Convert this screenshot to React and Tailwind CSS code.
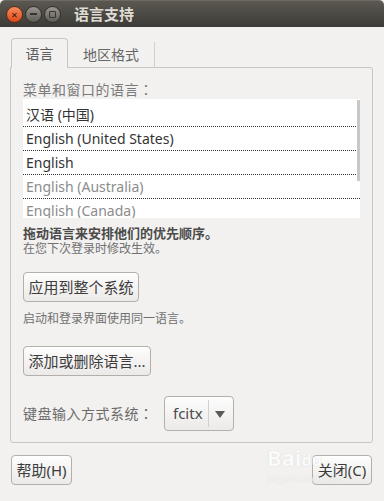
import React from 'react';

const font = "font-['Noto_Sans','Noto_Sans_CJK_SC',sans-serif]";
const cjk = "font-['Noto_Sans_CJK_SC',sans-serif]";
const colon = "font-['Noto_Sans_CJK_TC',sans-serif]";

const rows = [
  { label: '汉语 (中国)', dim: false },
  { label: 'English (United States)', dim: false },
  { label: 'English', dim: false },
  { label: 'English (Australia)', dim: true },
  { label: 'English (Canada)', dim: true },
];

const Btn = ({ children, className = '' }) => (
  <button
    className={`h-[30px] rounded-[4px] border border-[#b3b0ab] bg-gradient-to-b from-[#fdfdfd] to-[#eceae8] text-[15px] text-[#3c3c3c] shadow-[inset_0_1px_0_#fff] ${className}`}
  >
    {children}
  </button>
);

const App = () => {
  return (
    <div className={`relative w-[384px] h-[501px] bg-[#f2f1f0] flex flex-col ${font}`}>
      {/* title bar */}
      <div className="h-[27px] flex items-center pl-[6px] rounded-t-[5px] bg-gradient-to-b from-[#5b5851] to-[#3c3b37] border-t border-[#6d6a63]">
        <div className="flex items-center gap-[2px]">
          <div className="w-[17px] h-[17px] rounded-full bg-gradient-to-b from-[#f68b5d] to-[#dd4814] border border-[#5a2a14] flex items-center justify-center text-[11px] leading-none text-[#3a1608]">
            ×
          </div>
          <div className="w-[17px] h-[17px] rounded-full bg-gradient-to-b from-[#9a968e] to-[#5f5c56] border border-[#2f2e2b] flex items-center justify-center">
            <div className="w-[7px] h-[2px] bg-[#35342f]" />
          </div>
          <div className="w-[17px] h-[17px] rounded-full bg-gradient-to-b from-[#9a968e] to-[#5f5c56] border border-[#2f2e2b] flex items-center justify-center">
            <div className="w-[7px] h-[7px] border-[1.5px] border-[#35342f] rounded-[1px]" />
          </div>
        </div>
        <span className="ml-[13px] text-[15px] font-bold text-[#dfdbd2]">语言支持</span>
      </div>

      {/* tabs + panel */}
      <div className="px-[10px] pt-[11px]">
        <div className="flex h-[29px] items-end">
          <div className="relative z-10 -mb-px ml-px w-[57px] h-[30px] rounded-t-[4px] border border-b-0 border-[#c9c6c2] bg-[#f2f1f0] flex items-center justify-center text-[14px] text-[#5e5e5e]">
            语言
          </div>
          <div className="w-[87px] h-[25px] border-r border-[#d3d0cc] flex items-center justify-center text-[14px] text-[#666]">
            地区格式
          </div>
        </div>

        <div className="w-[363px] border border-[#c9c6c2] rounded-[3px] rounded-tl-none px-[12px] pt-[12px] pb-[12px]">
          <div className={`text-[14px] leading-[19px] text-[#7a7a7a] tracking-[0.5px] ${cjk}`}>
            菜单和窗口的语言<span className={colon}>：</span>
          </div>

          <div className="relative h-[119px] overflow-hidden bg-white pt-[4px]">
            {rows.map((r) => (
              <div
                key={r.label}
                className={`h-[24px] border-b border-dotted border-[#333] pl-[3px] flex items-center text-[14px] ${r.dim ? 'text-[#8c8c8c]' : 'text-[#333]'}`}
              >
                {r.label}
              </div>
            ))}
            <div className="absolute right-0 top-[1px] w-[3px] h-[81px] bg-[#c8c8c8]" />
          </div>

          <div className="mt-[7px] text-[13px] leading-[16px] font-bold text-[#4a4a4a]">
            拖动语言来安排他们的优先顺序。
          </div>
          <div className="text-[12px] leading-[15px] text-[#707070]">在您下次登录时修改生效。</div>

          <Btn className="mt-[16px] w-[116px]">应用到整个系统</Btn>

          <div className="mt-[9px] text-[12px] leading-[15px] text-[#707070]">启动和登录界面使用同一语言。</div>

          <Btn className="mt-[20px] w-[128px] block">添加或删除语言...</Btn>

          <div className="mt-[20px] h-[34px] flex items-center">
            <span className={`text-[14px] text-[#6a6a6a] w-[141px] tracking-[0.5px] ${cjk}`}>
              键盘输入方式系统<span className={colon}>：</span>
            </span>
            <div className="h-[35px] w-[70px] rounded-[4px] border border-[#b3b0ab] bg-gradient-to-b from-[#fdfdfd] to-[#eceae8] flex items-center">
              <span className="ml-[8px] w-[35px] text-[15px] text-[#4a4a4a]">fcitx</span>
              <div className="w-px h-[27px] bg-[#d2d0cd]" />
              <svg width="10" height="7" viewBox="0 0 10 7" className="ml-[6px] mt-[2px]">
                <path d="M0 0 H10 L5 7 Z" fill="#5a5a5a" />
              </svg>
            </div>
          </div>
        </div>
      </div>

      {/* bottom buttons */}
      <div className="mt-[12px] pl-[11px] pr-[12px] flex justify-between">
        <Btn className="w-[61px] h-[29px] text-[14px]">帮助(H)</Btn>
        <Btn className="w-[60px] h-[29px] text-[14px]">关闭(C)</Btn>
      </div>

      {/* watermark */}
      <div className="absolute left-[267px] top-[446px] pointer-events-none flex flex-col items-start opacity-70">
        <span className="text-[22px] font-bold leading-none text-white [text-shadow:0_0_1px_#bdbab5]">
          Bai<span className="text-[16px]">du</span>
        </span>
        <span className="mt-[6px] text-[10px] leading-none text-white [text-shadow:0_0_1px_#bdbab5] font-['Liberation_Serif',serif]">
          jingyan.baidu.com
        </span>
      </div>
    </div>
  );
};

export default App;
